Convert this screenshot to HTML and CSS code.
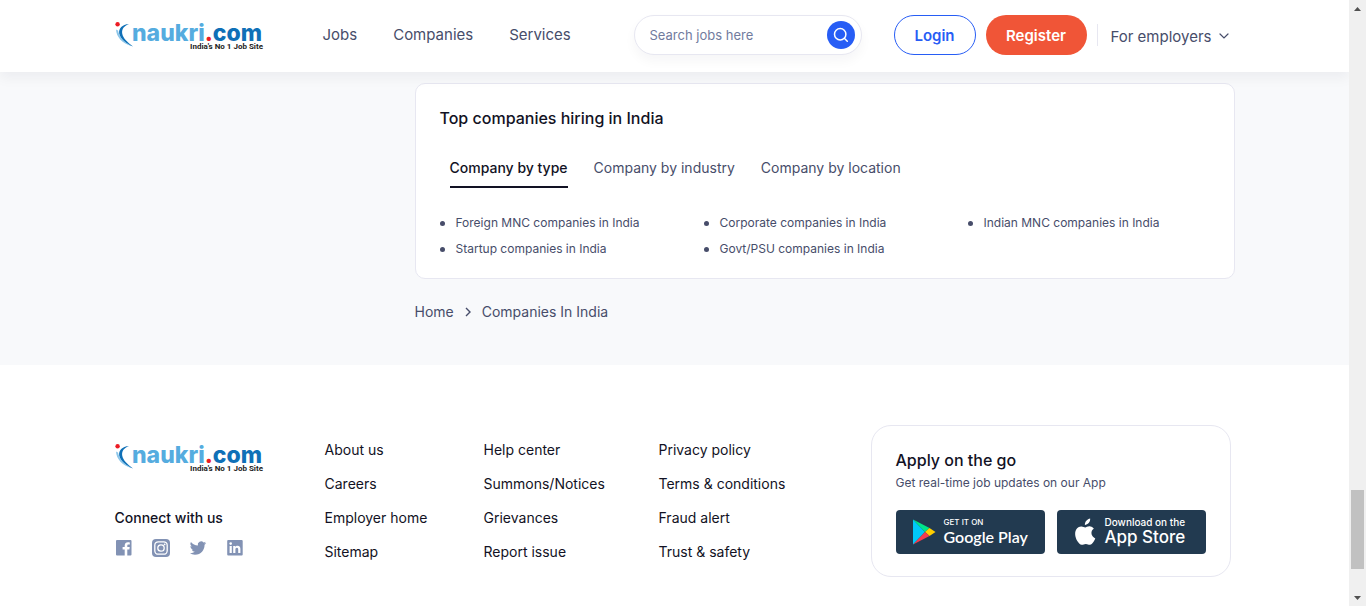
FILE: index.html
```html
<!DOCTYPE html>
<html lang="en">
<head>
<meta charset="utf-8">
<meta name="viewport" content="width=device-width, initial-scale=1">
<title>Companies In India</title>
<link rel="stylesheet" href="styles.css">
</head>
<body>
<div class="viewport">
  <div class="page">
    <header class="header">
      <div class="container header-row">
        <a class="logo" href="#" aria-label="Naukri home">
          <svg width="150" height="32" viewBox="0 0 150 32">
            <circle cx="2.600" cy="5.200" r="2.200" fill="#ec1c24"/>
            <path d="M14 5C7 5.500 3.500 9.500 4.200 14.500C4.900 19.500 10.500 25 18 27.500C12 23 8 19 7.200 14.500C6.600 10 9 7 14 5Z" fill="#0f70b7"/>
            <path d="M1 10.500C1.500 18 7 24.500 17 27C9 23 4.500 18.500 3 11.500Z" fill="#8cc6ea"/>
            <text class="logo-name" x="17" y="22"><tspan fill="#55acdf">naukri</tspan><tspan fill="#ec1c24">.</tspan><tspan fill="#0f70b7">com</tspan></text>
            <text class="logo-tag" x="148" y="30" text-anchor="end">India's No 1 Job Site</text>
          </svg>
        </a>
        <nav class="nav">
          <a href="#">Jobs</a><a href="#">Companies</a><a href="#">Services</a>
        </nav>
        <form class="search">
          <input type="text" placeholder="Search jobs here" aria-label="Search jobs here">
          <button type="button" aria-label="Search">
            <svg width="28" height="28" viewBox="0 0 28 28" fill="none" stroke="#fff" stroke-width="1.500" stroke-linecap="round"><circle cx="13.200" cy="13.200" r="5.700"/><path d="M17.300 17.300L20.300 20.300"/></svg>
          </button>
        </form>
        <button class="btn login" type="button">Login</button>
        <button class="btn register" type="button">Register</button>
        <button class="employers" type="button">For employers
          <svg width="10" height="6" viewBox="0 0 10 6" fill="none" stroke="#474d6a" stroke-width="1.200" stroke-linecap="round"><path d="M1 1L5 5L9 1"/></svg>
        </button>
      </div>
    </header>
    <main class="main">
      <div class="container">
        <div class="content">
          <section class="card">
            <h2>Top companies hiring in India</h2>
            <div class="tabs" role="tablist">
              <button role="tab" aria-selected="true" class="tab active">Company by type</button>
              <button role="tab" aria-selected="false" class="tab">Company by industry</button>
              <button role="tab" aria-selected="false" class="tab">Company by location</button>
            </div>
            <ul class="companies">
              <li><a href="#">Foreign MNC companies in India</a></li>
              <li><a href="#">Corporate companies in India</a></li>
              <li><a href="#">Indian MNC companies in India</a></li>
              <li><a href="#">Startup companies in India</a></li>
              <li><a href="#">Govt/PSU companies in India</a></li>
            </ul>
          </section>
          <nav class="crumbs" aria-label="Breadcrumb">
            <a href="#">Home</a>
            <svg width="6" height="10" viewBox="0 0 6 10" fill="none" stroke="#474d6a" stroke-width="1.400"><path d="M1 1L5 5L1 9"/></svg>
            <a href="#">Companies In India</a>
          </nav>
        </div>
      </div>
    </main>
    <footer class="footer">
      <div class="container footer-grid">
        <div class="brand">
          <a class="logo" href="#" aria-label="Naukri home">
            <svg width="150" height="32" viewBox="0 0 150 32">
              <circle cx="2.600" cy="5.200" r="2.200" fill="#ec1c24"/>
              <path d="M14 5C7 5.500 3.500 9.500 4.200 14.500C4.900 19.500 10.500 25 18 27.500C12 23 8 19 7.200 14.500C6.600 10 9 7 14 5Z" fill="#0f70b7"/>
              <path d="M1 10.500C1.500 18 7 24.500 17 27C9 23 4.500 18.500 3 11.500Z" fill="#8cc6ea"/>
              <text class="logo-name" x="17" y="22"><tspan fill="#55acdf">naukri</tspan><tspan fill="#ec1c24">.</tspan><tspan fill="#0f70b7">com</tspan></text>
              <text class="logo-tag" x="148" y="30" text-anchor="end">India's No 1 Job Site</text>
            </svg>
          </a>
          <h3>Connect with us</h3>
          <div class="social">
            <a href="#" aria-label="Facebook"><svg viewBox="0 0 18 18"><path fill="#8292b4" d="M2 1H15.500a1 1 0 0 1 1 1V15.500a1 1 0 0 1-1 1H12.300V10.500H14.400L14.700 8.100H12.300V6.700C12.300 6 12.600 5.500 13.500 5.500H14.800V3.400C14.500 3.300 13.800 3.200 12.900 3.200C11 3.200 9.700 4.400 9.700 6.500V8.100H7.600V10.500H9.700V16.500H2a1 1 0 0 1-1-1V2a1 1 0 0 1 1-1Z"/></svg></a>
            <a href="#" aria-label="Instagram"><svg viewBox="0 0 18 18"><rect width="18" height="18" rx="4" fill="#8292b4"/><g fill="none" stroke="#fff" stroke-width="1.300"><rect x="2.800" y="2.800" width="12.400" height="12.400" rx="3.500"/><circle cx="9" cy="9" r="3.200"/></g><circle cx="12.600" cy="5.400" r=".9" fill="#fff"/></svg></a>
            <a href="#" aria-label="Twitter"><svg viewBox="1 1 22 22"><path fill="#8292b4" d="M22 5.900c-.7.300-1.500.5-2.400.6.900-.5 1.500-1.300 1.800-2.200-.8.500-1.700.8-2.600 1a4.100 4.100 0 0 0-7 3.700A11.600 11.600 0 0 1 3.400 4.700a4.100 4.100 0 0 0 1.300 5.500c-.7 0-1.300-.2-1.900-.5v.1a4.100 4.100 0 0 0 3.300 4c-.6.200-1.200.2-1.800.1a4.100 4.100 0 0 0 3.800 2.800A8.200 8.200 0 0 1 2 18.400 11.600 11.600 0 0 0 8.300 20.200c7.500 0 11.700-6.300 11.700-11.700v-.5c.8-.6 1.500-1.300 2-2.100z"/></svg></a>
            <a href="#" aria-label="LinkedIn"><svg viewBox="0 0 18 18"><rect x="1.200" y="1" width="15.500" height="15.500" rx="1" fill="#8292b4"/><g fill="#fff"><circle cx="4.700" cy="4.600" r="1.300"/><path d="M3.600 7H5.800V14H3.600ZM7.200 7H9.300V8C9.700 7.300 10.500 6.800 11.600 6.800C13.700 6.800 14.400 8.200 14.400 10.100V14H12.200V10.600C12.200 9.600 12 8.700 10.900 8.700C9.700 8.700 9.400 9.600 9.400 10.500V14H7.200Z"/></g></svg></a>
          </div>
        </div>
        <ul class="links"><li><a href="#">About us</a></li><li><a href="#">Careers</a></li><li><a href="#">Employer home</a></li><li><a href="#">Sitemap</a></li></ul>
        <ul class="links"><li><a href="#">Help center</a></li><li><a href="#">Summons/Notices</a></li><li><a href="#">Grievances</a></li><li><a href="#">Report issue</a></li></ul>
        <ul class="links"><li><a href="#">Privacy policy</a></li><li><a href="#">Terms &amp; conditions</a></li><li><a href="#">Fraud alert</a></li><li><a href="#">Trust &amp; safety</a></li></ul>
        <section class="apps">
          <h2>Apply on the go</h2>
          <p>Get real-time job updates on our App</p>
          <div class="stores">
            <a class="store google" href="#">
              <svg width="24" height="26" viewBox="0 0 24 26"><path d="M1 .5V25.500L13 13Z" fill="#00c8f8"/><path d="M1 .5L17.500 9L13 13Z" fill="#00e48a"/><path d="M17.500 9L23.500 13L17.500 17L13 13Z" fill="#ffce00"/><path d="M1 25.500L17.500 17L13 13Z" fill="#f43b4e"/></svg>
              <span><small>GET IT ON</small><b>Google Play</b></span>
            </a>
            <a class="store apple" href="#">
              <svg width="24" height="30" viewBox="1 0 22 28"><path fill="#fff" d="M18 14.800C18 12.200 20.100 11 20.300 10.900C19 9.100 17.100 8.800 16.400 8.700C14.700 8.500 13.100 9.700 12.200 9.700C11.300 9.700 10 8.700 8.500 8.800C6.600 8.800 4.800 9.900 3.800 11.600C1.700 15.100 3.300 20.300 5.300 23.100C6.300 24.500 7.400 26.100 9 26C10.500 25.900 11 25.100 12.800 25.100C14.500 25.100 15 26 16.500 26C18.100 26 19.100 24.600 20 23.200C21.100 21.600 21.600 20 21.600 19.900C21.500 19.900 18 18.600 18 14.800ZM11.900 7.500C11.700 4.500 14.200 2 16.800 1.500C17.200 4.600 14.500 7.400 11.900 7.500Z"/></svg>
              <span><small>Download on the</small><b>App Store</b></span>
            </a>
          </div>
        </section>
      </div>
    </footer>
  </div>
  <div class="scrollbar" aria-hidden="true">
    <svg width="7" height="4" viewBox="0 0 7 4"><path d="M0 4L3.500 0L7 4Z" fill="#505050"/></svg>
    <div class="track"><div class="thumb"></div></div>
    <svg width="7" height="4" viewBox="0 0 7 4"><path d="M0 0L3.500 4L7 0Z" fill="#505050"/></svg>
  </div>
</div>
</body>
</html>
```
FILE: styles.css
```css
* { box-sizing: border-box; }
body { margin: 0; font-family: Inter, "Liberation Sans", sans-serif; color: #121224; background: #fff; }
a { color: inherit; text-decoration: none; }
button { font-family: inherit; border: 0; background: none; padding: 0; cursor: pointer; color: inherit; }
h2, h3, p, ul { margin: 0; padding: 0; }
ul { list-style: none; }
svg { display: block; flex: none; }
.viewport { display: flex; height: 100vh; overflow: hidden; }
.page { flex: 1; min-width: 0; overflow: hidden; }
.container { max-width: 1120px; margin: 0 auto; }

.header { position: relative; background: #fff; height: 72px; box-shadow: 0 6px 12px rgba(20, 16, 30, .05); }
.header-row { display: flex; align-items: center; height: 70px; }
.logo { display: block; }
.logo-name { font: 800 23px Inter, sans-serif; }
.logo-tag { font: bold 8px Roboto, sans-serif; fill: #222; }
.nav { display: flex; gap: 36px; margin-left: 58px; font-size: 15px; line-height: 20px; color: #474d6a; }
.search { display: flex; align-items: center; width: 228px; height: 40px; margin-left: auto; padding: 0 6px 0 15px; border: 1px solid #e7e7f1; border-radius: 20px; box-shadow: 0 6px 12px rgba(30, 10, 58, .04); background: #fff; }
.search input { flex: 1; min-width: 0; border: 0; outline: 0; padding: 0; font: 13px Inter, sans-serif; background: none; }
.search input::placeholder { color: #717b9e; opacity: 1; }
.search button { background: #275df5; border-radius: 50%; }
.btn { height: 40px; border-radius: 20px; font-size: 15px; font-weight: 600; }
.login { width: 82px; margin-left: 32px; border: 1px solid #275df5; color: #275df5; }
.register { width: 101px; margin-left: 10px; background: #f05537; color: #fff; }
.employers { display: flex; align-items: center; justify-content: space-between; width: 138px; height: 22px; margin-left: 10px; padding: 2px 6px 0 13px; border-left: 1px solid #e7e7f1; font-size: 15px; color: #474d6a; }

.main { background: #f8f9fb; padding: 11px 0 42px; }
.content { width: 820px; margin-left: auto; }
.card { background: #fff; border: 1px solid #e7e7f1; border-radius: 10px; padding: 24px 24px 16px; }
.card h2, .apps h2 { font-size: 16px; line-height: 20px; font-weight: 500; }
.tabs { display: flex; gap: 26px; margin: 30px 10px 22px; }
.tab { height: 30px; padding-bottom: 9px; border-bottom: 2px solid transparent; font-size: 14px; line-height: 20px; color: #474d6a; }
.tab.active { color: #121224; font-weight: 500; border-color: #121224; }
.companies { display: grid; grid-template-columns: repeat(3, 264px); font-size: 12px; line-height: 26px; color: #474d6a; }
.companies li { display: flex; align-items: center; gap: 11px; }
.companies li::before { content: ""; width: 5px; height: 5px; border-radius: 50%; background: #474d6a; }
.crumbs { display: flex; align-items: center; gap: 11px; margin-top: 23px; padding-bottom: 1px; font-size: 14px; line-height: 20px; color: #474d6a; }

.footer { padding-top: 60px; }
.footer-grid { display: grid; grid-template-columns: 210px 159px 175px 212px 360px; align-items: start; }
.brand { padding-top: 16px; }
.brand h3 { margin-top: 35px; font-size: 14px; line-height: 20px; font-weight: 500; }
.social { display: flex; gap: 19px; margin-top: 11px; }
.social svg { width: 18px; height: 18px; }
.links { display: grid; gap: 14px; padding-top: 15px; font-size: 14px; line-height: 20px; }
.apps { border: 1px solid #e7e7f1; border-radius: 20px; padding: 24px 24px 22px; }
.apps p { font-size: 12px; line-height: 18px; margin: 4px 0 18px; color: #474d6a; }
.stores { display: flex; gap: 12px; }
.store { display: flex; align-items: center; gap: 8px; width: 149px; height: 44px; padding-left: 16px; border-radius: 4px; background: #223a50; color: #fff; }
.store small, .store b { display: block; white-space: nowrap; }
.store small { font-size: 8px; line-height: 10px; font-weight: 500; }
.store b { font-size: 17px; line-height: 20px; font-weight: 500; }
.google b { font-family: Lato, sans-serif; font-size: 16px; font-weight: 600; }
.apple small { font-size: 10px; }

.scrollbar { display: flex; flex-direction: column; align-items: center; width: 17px; padding: 7px 0 6px; background: #f0f0f0; }
.track { display: flex; flex-direction: column; justify-content: flex-end; flex: 1; padding-bottom: 27px; }
.thumb { width: 13px; height: 79px; background: #c1c1c1; }
```
